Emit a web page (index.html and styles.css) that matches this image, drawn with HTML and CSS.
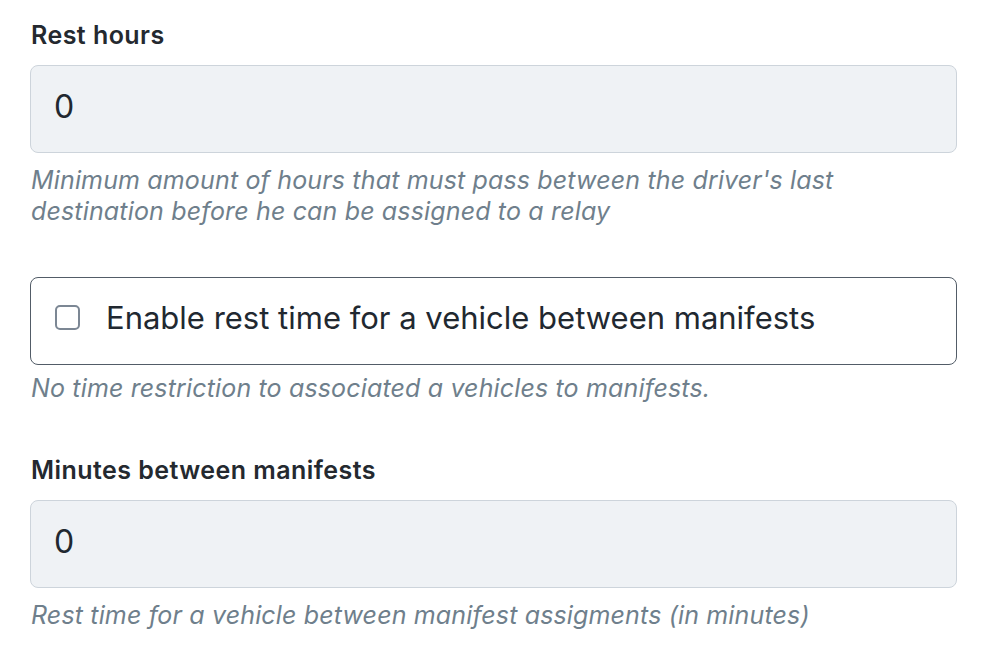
FILE: index.html
```html
<!DOCTYPE html>
<html>
<head>
<meta charset="utf-8">
<link rel="stylesheet" href="styles.css">
</head>
<body>
<div class="form">
  <div class="field">
    <label class="label">Rest hours</label>
    <div class="input">0</div>
    <p class="help">Minimum amount of hours that must pass between the driver's last destination before he can be assigned to a relay</p>
  </div>
  <div class="field field-check">
    <label class="check">
      <span class="box"></span>
      <span class="check-text">Enable rest time for a vehicle between manifests</span>
    </label>
    <p class="help help-check">No time restriction to associated a vehicles to manifests.</p>
  </div>
  <div class="field field-last">
    <label class="label">Minutes between manifests</label>
    <div class="input">0</div>
    <p class="help">Rest time for a vehicle between manifest assigments (in minutes)</p>
  </div>
</div>
</body>
</html>
```
FILE: styles.css
```css
html, body {
  margin: 0;
  padding: 0;
  background: #ffffff;
}
body {
  font-family: Inter, "Noto Sans", sans-serif;
  color: #212830;
}
.form {
  width: 927px;
  padding: 19px 0 0 30px;
  display: flex;
  flex-direction: column;
}
.field {
  display: flex;
  flex-direction: column;
}
.label {
  font-size: 25px;
  font-weight: 600;
  line-height: 32px;
  letter-spacing: 0.45px;
  color: #24292f;
  margin-left: 1px;
}
.input {
  margin-top: 14px;
  box-sizing: border-box;
  height: 88px;
  border: 1px solid #cdd4db;
  border-radius: 8px;
  background: #eff2f5;
  font-size: 32px;
  display: flex;
  align-items: center;
  padding: 0 0 6px 23px;
  color: #212830;
}
.help {
  margin: 12px 0 0 1px;
  font-size: 25px;
  line-height: 31px;
  letter-spacing: 0.15px;
  font-style: italic;
  color: #6f7f8c;
  width: 860px;
}
.field-check {
  margin-top: 50px;
}
.check {
  box-sizing: border-box;
  height: 88px;
  border: 1px solid #525c67;
  border-radius: 8px;
  display: flex;
  align-items: center;
  padding: 0 0 8px 24px;
  gap: 26px;
}
.box {
  width: 25px;
  height: 25px;
  border: 2px solid #7c8794;
  border-radius: 5px;
  box-sizing: border-box;
  flex: none;
}
.check-text {
  font-size: 31px;
  color: #212830;
}
.help-check {
  margin-top: 8px;
}
.field-last {
  margin-top: 50px;
}
```
